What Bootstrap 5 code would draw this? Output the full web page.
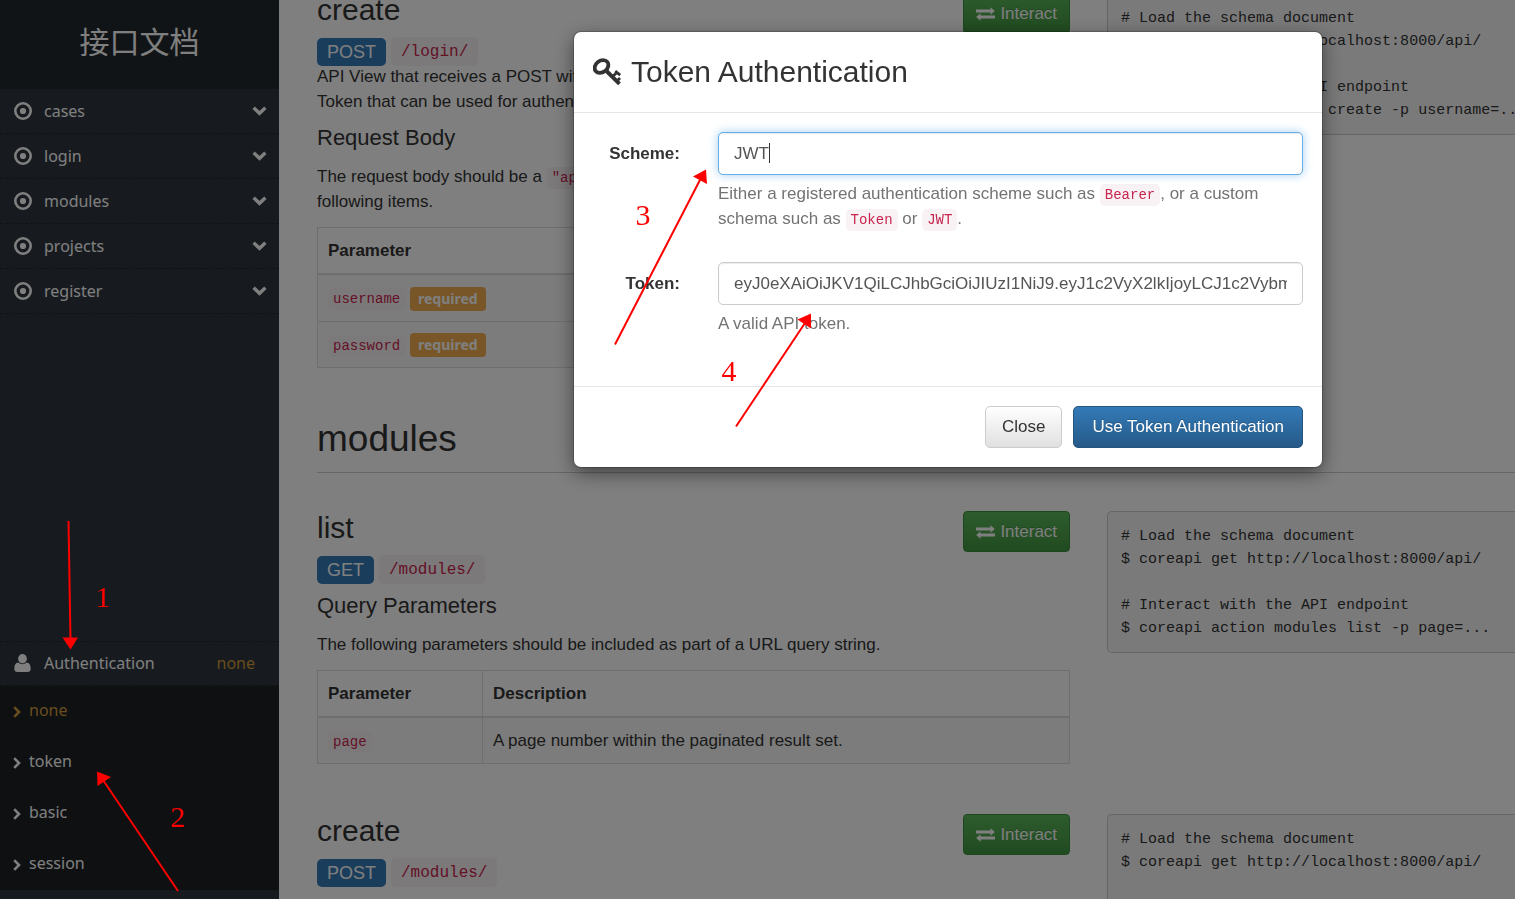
<!DOCTYPE html>
<html lang="zh-CN">
<head>
<meta charset="utf-8">
<meta name="viewport" content="width=device-width, initial-scale=1">
<title>接口文档</title>
<link href="https://cdn.jsdelivr.net/npm/bootstrap@5.3.0/dist/css/bootstrap.min.css" rel="stylesheet">
<style>
  body { font-family: "Liberation Sans", Arial, sans-serif; font-size: 17px; line-height: 25px; color: #333; background: #fff; }
  h2, h3, h4 { font-weight: 400; color: #333; }
  code { font-family: "Liberation Mono", monospace; font-size: 14px; line-height: 17px; color: #c7254e; background: #f9f2f4; border-radius: 5px; padding: 3px 5px; }

  .side { width: 279px; background: #2e353d; color: #fff; font-family: "Noto Sans", Verdana, sans-serif; font-size: 16px; line-height: 20px; }
  .side a { color: #fff; }
  .side .brand-title { height: 89px; padding-bottom: 9px; background: #23282e; font-family: "Noto Sans CJK SC", sans-serif; font-size: 30px; font-weight: 400; }
  .side .entry { height: 45px; padding: 0 12px 1px 14px; border-bottom: 1px dashed #20252a; }
  .side .entry svg { fill: #fff; }
  .side .entry-icon { width: 30px; }
  .side .auth-entry { border-top: 1px dashed #20252a; padding-right: 24px; }
  .side .auth-menu { background: #1c2023; margin-bottom: 9px; }
  .side .auth-menu a { height: 51px; padding: 0 13px 4px; gap: 8px; }
  .side .auth-menu svg { margin-top: 4px; }
  .side .current { color: #d19b3d; }

  .docs { padding-left: 38px; margin-top: -7px; min-width: 0; }
  .endpoint { display: grid; grid-template-columns: minmax(0, 24fr) minmax(0, 13fr); column-gap: 37px; margin-bottom: 50px; }
  .endpoint h3 { font-size: 30px; line-height: 33px; margin-bottom: 13px; }
  .endpoint h4 { font-size: 22px; line-height: 24px; margin: 12px 0 14px; }
  .endpoint p { margin-bottom: 13px; }
  .endpoint .route { height: 25px; gap: 5px; }
  .endpoint .verb { background: #337ab7; color: #fff; border-radius: 5px; padding: 0 10px; font-size: 18px; line-height: 28px; }
  .endpoint .route code { font-size: 16px; line-height: 28px; padding: 1px 10px 0; }
  .group-title { font-size: 37px; line-height: 42px; padding-bottom: 12px; margin: 0 0 38px; border-bottom: 1px solid #ccc; }
  .shell { height: 142px; margin: 0; padding: 13px; border: 1px solid #ccc; border-right: 0; border-radius: 5px 0 0 5px; background: #f5f5f5; color: #333; font-family: "Liberation Mono", monospace; font-size: 15px; line-height: 23px; overflow: hidden; }
  .btn-interact { height: 41px; padding: 0 12px; border: 1px solid #3e8f3e; border-radius: 4px; background: linear-gradient(#5cb85c, #419641); color: #fff; font-size: 17px; line-height: 38px; text-shadow: 0 -1px 0 rgba(0,0,0,.2); gap: 5px; }
  .btn-interact svg { fill: #fff; }
  .params { margin: 0; border: 1px solid #ddd; color: #333; }
  .params th, .params td { border: 1px solid #ddd; padding: 10px; height: 46px; line-height: 25px; color: #333; }
  .params thead th { border-bottom-width: 2px; }
  .params .name-col { width: 165px; }
  .params tbody td { background: #f9f9f9; }
  .req { display: inline-block; vertical-align: middle; background: #f0ad4e; color: #fff; font: 700 14px/24px "Noto Sans", sans-serif; padding: 0 8px; border-radius: 4px; }

  .auth-modal { padding-left: 381px; }
  .auth-modal .modal-dialog { max-width: 748px; margin: 32px auto; }
  .auth-modal .modal-content { border: 0; border-radius: 7px; box-shadow: 0 6px 19px rgba(0,0,0,.5), 0 0 0 1px rgba(0,0,0,.2); color: #333; }
  .auth-modal .modal-header { height: 81px; padding: 0 19px; gap: 9px; justify-content: flex-start; border-bottom: 1px solid #e5e5e5; }
  .auth-modal .modal-title { font-size: 30px; line-height: 36px; }
  .auth-modal .modal-body { padding: 19px 19px 50px; }
  .auth-modal .field { display: grid; grid-template-columns: 87px 1fr; column-gap: 38px; }
  .auth-modal .field + .field { margin-top: 31px; }
  .auth-modal label { font-weight: 700; line-height: 43px; text-align: right; }
  .auth-modal .form-control { height: 43px; padding: 0 15px; border: 1px solid #ccc; border-radius: 5px; color: #555; font-size: 17px; box-shadow: inset 0 1px 1px rgba(0,0,0,.08); }
  .auth-modal .form-control.picked { border-color: #66afe9; box-shadow: inset 0 1px 1px rgba(0,0,0,.08), 0 0 10px rgba(102,175,233,.6); }
  .auth-modal .form-text { margin-top: 6px; color: #737373; font-size: 17px; }
  .auth-modal .caret { left: 51px; top: 11px; width: 1px; height: 20px; background: #333; }
  .auth-modal .modal-footer { padding: 19px; gap: 11px; border-top: 1px solid #e5e5e5; }
  .auth-modal .btn { height: 42px; padding: 0 16px; margin: 0; font-size: 17px; border-radius: 5px; }
  .auth-modal .btn-close-dialog { border: 1px solid #ccc; background: linear-gradient(#fff, #e0e0e0); color: #333; }
  .auth-modal .btn-use { padding: 0 18px; border: 1px solid #245580; background: linear-gradient(#337ab7, #265a88); color: #fff; text-shadow: 0 -1px 0 rgba(0,0,0,.2); }

  .notes { top: 0; left: 0; z-index: 1100; overflow: visible; pointer-events: none; }
  .notes line { stroke: #f00; stroke-width: 2; }
  .notes path, .notes text { fill: #f00; }
  .notes text { font-family: "Liberation Serif", serif; font-size: 30px; text-anchor: middle; }
</style>
</head>
<body class="vh-100 overflow-hidden position-relative">
<svg class="d-none">
  <symbol id="dot" viewBox="0 0 18 18"><path fill-rule="evenodd" d="M9 0a9 9 0 1 0 0 18A9 9 0 0 0 9 0zm0 2.6a6.400 6.400 0 1 1 0 12.800 6.400 6.400 0 0 1 0-12.800z"/><circle cx="9" cy="9" r="3.100"/></symbol>
  <symbol id="down" viewBox="0 0 15 10"><path fill="none" stroke="#fff" stroke-width="3.400" stroke-linejoin="miter" d="M1.600 1.700 7.500 7.300l5.900-5.600"/></symbol>
  <symbol id="right" viewBox="0 0 8 12"><path fill="none" stroke="currentColor" stroke-width="2.600" d="M1.200 1.200 6 6l-4.800 4.800"/></symbol>
  <symbol id="swap" viewBox="0 0 19 14"><path d="M0 2.600h14.500V.2L18.800 4l-4.300 3.800V5.400H0zM19 8.600v2.800H4.500v2.400L.2 10l4.300-3.800v2.400z"/></symbol>
</svg>

<div class="d-flex h-100 overflow-hidden">
  <nav class="side d-flex flex-column flex-shrink-0">
    <div class="brand-title d-flex align-items-center justify-content-center">接口文档</div>
    <a href="#" class="entry d-flex align-items-center text-decoration-none"><span class="entry-icon d-flex"><svg width="18" height="18"><use href="#dot"/></svg></span>cases<svg class="ms-auto" width="15" height="10"><use href="#down"/></svg></a>
    <a href="#" class="entry d-flex align-items-center text-decoration-none"><span class="entry-icon d-flex"><svg width="18" height="18"><use href="#dot"/></svg></span>login<svg class="ms-auto" width="15" height="10"><use href="#down"/></svg></a>
    <a href="#" class="entry d-flex align-items-center text-decoration-none"><span class="entry-icon d-flex"><svg width="18" height="18"><use href="#dot"/></svg></span>modules<svg class="ms-auto" width="15" height="10"><use href="#down"/></svg></a>
    <a href="#" class="entry d-flex align-items-center text-decoration-none"><span class="entry-icon d-flex"><svg width="18" height="18"><use href="#dot"/></svg></span>projects<svg class="ms-auto" width="15" height="10"><use href="#down"/></svg></a>
    <a href="#" class="entry d-flex align-items-center text-decoration-none"><span class="entry-icon d-flex"><svg width="18" height="18"><use href="#dot"/></svg></span>register<svg class="ms-auto" width="15" height="10"><use href="#down"/></svg></a>
    <div class="mt-auto">
      <a href="#" class="entry auth-entry d-flex align-items-center text-decoration-none"><span class="entry-icon d-flex"><svg width="17" height="18" viewBox="0 0 17 18"><ellipse cx="8.500" cy="4.700" rx="4.400" ry="4.700"/><path d="M4.300 8.600Q8.500 12 12.700 8.600C15.500 9 16.700 11 16.700 14.800 16.700 17 15.500 18 13.500 18h-10C1.500 18 .3 17 .3 14.800.3 11 1.500 9 4.300 8.600z"/></svg></span>Authentication<span class="current ms-auto">none</span></a>
      <div class="auth-menu">
        <a href="#" class="current d-flex align-items-center text-decoration-none"><svg width="8" height="12"><use href="#right"/></svg>none</a>
        <a href="#" class="d-flex align-items-center text-decoration-none"><svg width="8" height="12"><use href="#right"/></svg>token</a>
        <a href="#" class="d-flex align-items-center text-decoration-none"><svg width="8" height="12"><use href="#right"/></svg>basic</a>
        <a href="#" class="d-flex align-items-center text-decoration-none"><svg width="8" height="12"><use href="#right"/></svg>session</a>
      </div>
    </div>
  </nav>

  <main class="docs flex-grow-1">
    <section class="endpoint">
      <div>
        <div class="d-flex justify-content-between align-items-start"><h3>create</h3><button class="btn-interact d-flex align-items-center mb-n2" type="button"><svg width="19" height="14"><use href="#swap"/></svg>Interact</button></div>
        <div class="route d-flex align-items-center"><span class="verb">POST</span><code>/login/</code></div>
        <p class="mb-0">API View that receives a POST with a user's username and password.<br>Token that can be used for authenticated requests.</p>
        <h4>Request Body</h4>
        <p>The request body should be a <code>"application/json"</code> encoded object, containing the<br>following items.</p>
        <table class="params table">
          <thead><tr><th>Parameter</th></tr></thead>
          <tbody>
            <tr><td><code>username</code> <span class="req">required</span></td></tr>
            <tr><td><code>password</code> <span class="req">required</span></td></tr>
          </tbody>
        </table>
      </div>
      <pre class="shell"># Load the schema document
$ coreapi get http://localhost:8000/api/

# Interact with the API endpoint
$ coreapi action login create -p username=...</pre>
    </section>

    <h2 class="group-title">modules</h2>

    <section class="endpoint">
      <div>
        <div class="d-flex justify-content-between align-items-start"><h3>list</h3><button class="btn-interact d-flex align-items-center mb-n2" type="button"><svg width="19" height="14"><use href="#swap"/></svg>Interact</button></div>
        <div class="route d-flex align-items-center"><span class="verb">GET</span><code>/modules/</code></div>
        <h4>Query Parameters</h4>
        <p>The following parameters should be included as part of a URL query string.</p>
        <table class="params table">
          <thead><tr><th class="name-col">Parameter</th><th>Description</th></tr></thead>
          <tbody><tr><td><code>page</code></td><td>A page number within the paginated result set.</td></tr></tbody>
        </table>
      </div>
      <pre class="shell"># Load the schema document
$ coreapi get http://localhost:8000/api/

# Interact with the API endpoint
$ coreapi action modules list -p page=...</pre>
    </section>

    <section class="endpoint">
      <div>
        <div class="d-flex justify-content-between align-items-start"><h3>create</h3><button class="btn-interact d-flex align-items-center mb-n2" type="button"><svg width="19" height="14"><use href="#swap"/></svg>Interact</button></div>
        <div class="route d-flex align-items-center"><span class="verb">POST</span><code>/modules/</code></div>
      </div>
      <pre class="shell"># Load the schema document
$ coreapi get http://localhost:8000/api/
</pre>
    </section>
  </main>
</div>

<div class="modal-backdrop show"></div>
<div class="auth-modal modal show d-block" role="dialog" aria-labelledby="dialog-title">
  <div class="modal-dialog">
    <form class="modal-content">
      <div class="modal-header">
        <svg width="29" height="28" viewBox="0 0 29 28" fill="none" stroke="#333"><ellipse cx="8.500" cy="8.500" rx="7.400" ry="5.800" transform="rotate(-38 8.500 8.500)" stroke-width="3.800"/><path d="M13 12.500 26.500 25.800" stroke-width="4"/><path d="M19 19l5-4.500M23 24l4-4M22.200 13.200l5 4" stroke-width="2.800"/></svg>
        <h3 class="modal-title" id="dialog-title">Token Authentication</h3>
      </div>
      <div class="modal-body">
        <div class="field">
          <label for="scheme">Scheme:</label>
          <div>
            <div class="position-relative"><input class="form-control picked" id="scheme" type="text" value="JWT"><span class="caret position-absolute"></span></div>
            <div class="form-text">Either a registered authentication scheme such as <code>Bearer</code>, or a custom<br>schema such as <code>Token</code> or <code>JWT</code>.</div>
          </div>
        </div>
        <div class="field">
          <label for="token">Token:</label>
          <div>
            <input class="form-control" id="token" type="text" value="eyJ0eXAiOiJKV1QiLCJhbGciOiJIUzI1NiJ9.eyJ1c2VyX2lkIjoyLCJ1c2VybmFtZSI6">
            <div class="form-text">A valid API token.</div>
          </div>
        </div>
      </div>
      <div class="modal-footer">
        <button class="btn btn-close-dialog" type="button">Close</button>
        <button class="btn btn-use" type="button">Use Token Authentication</button>
      </div>
    </form>
  </div>
</div>

<svg class="notes position-absolute" width="1" height="1">
  <line x1="68.500" y1="521" x2="70.500" y2="640"/><path d="M62.500 637.500h15.500L70.500 649.500z"/>
  <line x1="178" y1="891" x2="103" y2="780"/><path d="M97 771.500l14 5.500-13.500 9z"/>
  <line x1="615" y1="344.500" x2="701" y2="178"/><path d="M706 169.500l1 14.500-14-7.500z"/>
  <line x1="736" y1="426.500" x2="805" y2="323"/><path d="M811 313.500v15l-13.500-9z"/>
  <text x="103" y="607">1</text>
  <text x="178" y="827">2</text>
  <text x="643" y="225">3</text>
  <text x="729" y="381">4</text>
</svg>
<script src="https://cdn.jsdelivr.net/npm/bootstrap@5.3.0/dist/js/bootstrap.bundle.min.js"></script>
</body>
</html>
